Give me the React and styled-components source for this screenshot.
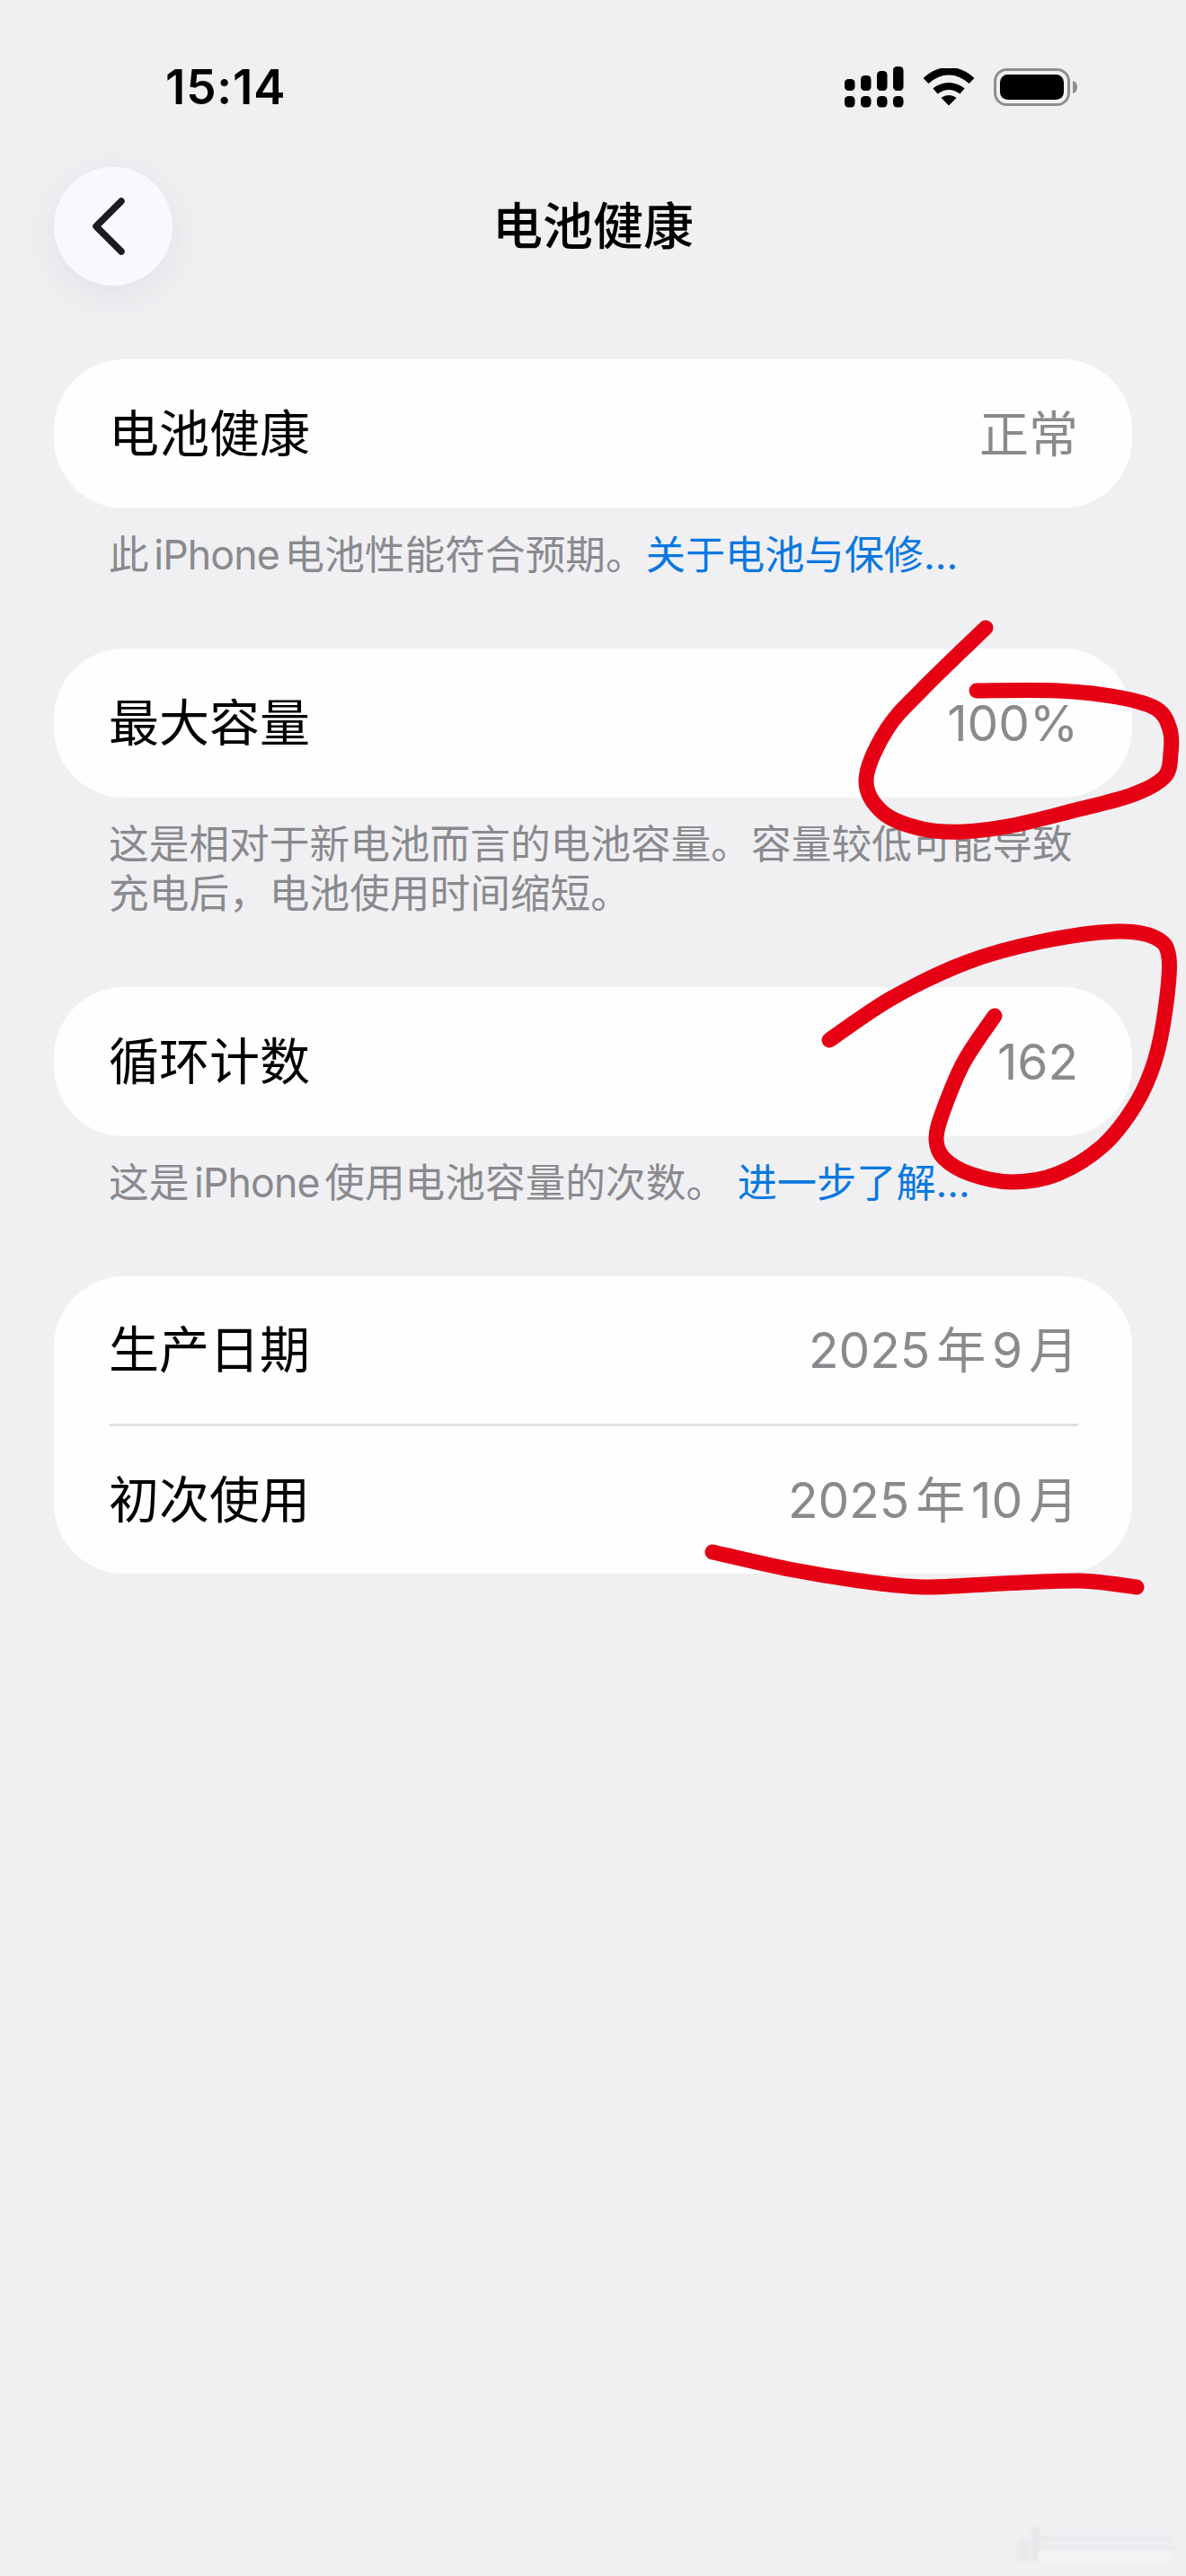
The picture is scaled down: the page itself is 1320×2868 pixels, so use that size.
import React from "react";
import styled, { createGlobalStyle } from "styled-components";

const Global = createGlobalStyle`
  html, body { margin: 0; padding: 0; background: #f0f0f3; }
  * { box-sizing: border-box; }
`;

const Page = styled.div`
  position: relative;
  width: 1320px;
  height: 2868px;
  overflow: hidden;
  background: #f0f0f3;
  color: #000;
  font-family: Inter, "Noto Sans CJK SC", sans-serif;
  text-autospace: normal;
`;

const StatusBar = styled.div`
  display: flex;
  align-items: center;
  justify-content: space-between;
  height: 50px;
  margin-top: 72px;
  padding: 0 120px 0 184px;
`;

const Time = styled.span`
  font-size: 53px;
  font-weight: 600;
  letter-spacing: 0.8px;
  line-height: 50px;
`;

const StatusIcons = styled.div`
  display: flex;
  align-items: center;
  gap: 21px;
`;

const Header = styled.header`
  display: grid;
  grid-template-columns: 132px 1fr 132px;
  align-items: center;
  margin-top: 64px;
  padding: 0 60px;
`;

const BackButton = styled.button`
  display: flex;
  align-items: center;
  justify-content: center;
  width: 132px;
  height: 132px;
  padding: 0 10px 0 0;
  border: 0;
  border-radius: 50%;
  background: #f9f9fd;
  box-shadow: 0 10px 44px rgba(60, 60, 80, 0.08);
`;

const Title = styled.h1`
  margin: 0;
  text-align: center;
  font-size: 56px;
  font-weight: 500;
  line-height: 70px;
`;

const Content = styled.main`
  display: flex;
  flex-direction: column;
  gap: 76.5px;
  margin-top: 82px;
  padding: 0 60px;
`;

const Section = styled.section`
  display: flex;
  flex-direction: column;
  gap: 25px;
`;

const Card = styled.div`
  display: flex;
  flex-direction: column;
  border-radius: 78px;
  background: #fefefe;
`;

const Row = styled.div`
  display: flex;
  align-items: center;
  justify-content: space-between;
  height: ${(p) => (p.$compact ? "164px" : "166px")};
  padding: 0 60px 0 61px;
`;

const Label = styled.span`
  font-size: 56px;
  line-height: 70px;
`;

const Value = styled.span`
  color: #8a8a8e;
  font-size: 55px;
  line-height: 70px;
`;

const Separator = styled.div`
  height: 3px;
  margin: 0 60px 0 61px;
  background: #e2e2e4;
`;

const Caption = styled.p`
  margin: 0;
  padding: 0 50px 0 61px;
  color: #8a8a8e;
  font-size: 44.7px;
  line-height: 54.5px;
`;

const Latin = styled.span`
  letter-spacing: -0.9px;
`;

const Link = styled.span`
  color: #0a78e0;
  font-size: 44.2px;
`;

const Annotations = styled.svg`
  position: absolute;
  top: 0;
  left: 0;
  pointer-events: none;
`;

const Watermark = styled.svg`
  position: absolute;
  right: 0;
  bottom: 0;
  filter: blur(2px);
`;

const smooth = (pts) => {
  let d = `M${pts[0][0]} ${pts[0][1]}`;
  for (let i = 0; i < pts.length - 1; i++) {
    const p0 = pts[i - 1] || pts[i];
    const p1 = pts[i];
    const p2 = pts[i + 1];
    const p3 = pts[i + 2] || p2;
    const c1x = p1[0] + (p2[0] - p0[0]) / 6;
    const c1y = p1[1] + (p2[1] - p0[1]) / 6;
    const c2x = p2[0] - (p3[0] - p1[0]) / 6;
    const c2y = p2[1] - (p3[1] - p1[1]) / 6;
    d += ` C${c1x} ${c1y} ${c2x} ${c2y} ${p2[0]} ${p2[1]}`;
  }
  return d;
};

const strokes = [
  [[1097, 699], [1027, 767], [987, 812], [964, 868], [983, 905], [1027, 923], [1073, 926], [1127, 919], [1193, 903], [1260, 885], [1296, 865], [1303, 839], [1302, 812], [1287, 789], [1243, 776], [1177, 769], [1087, 769]],
  [[923, 1158], [993, 1111], [1077, 1071], [1160, 1048], [1243, 1037], [1286, 1044], [1301, 1066], [1297, 1124], [1285, 1182], [1263, 1231], [1227, 1276], [1177, 1307], [1127, 1316], [1080, 1307], [1050, 1289], [1042, 1267], [1050, 1236], [1073, 1182], [1107, 1131]],
  [[793, 1728], [878, 1747], [957, 1760], [1028, 1767], [1115, 1763], [1202, 1760], [1265, 1767]],
];

const SignalIcon = () => (
  <svg width="66" height="46" viewBox="0 0 66 46">
    {[[0, 14], [18, 10], [36, 5], [54, 0]].map(([x, y]) => (
      <rect key={x} x={x} y={y} width="11.5" height={27 - y} rx="4.5" fill="#000" />
    ))}
    {[0, 18, 36, 54].map((x) => (
      <rect key={x} x={x} y="33" width="11.5" height="12.5" rx="4.5" fill="#000" />
    ))}
  </svg>
);

const WifiIcon = () => (
  <svg width="58" height="42" viewBox="0 0 58 42">
    <path d="M3.5 14 C19 -0.5 39 -0.5 54.5 14" fill="none" stroke="#000" strokeWidth="8.5" />
    <path d="M14 25.5 C23 18 35 18 44 25.5" fill="none" stroke="#000" strokeWidth="8" />
    <path d="M20.5 33 C25.5 29 32.5 29 37.5 33 L29 41.5 Z" fill="#000" />
  </svg>
);

const BatteryIcon = () => (
  <svg width="94" height="42" viewBox="0 0 94 42">
    <rect x="1.5" y="1.5" width="82" height="39" rx="13" fill="none" stroke="#8e8e90" strokeWidth="3" />
    <rect x="7" y="7" width="71" height="28" rx="8.5" fill="#000" />
    <path d="M88 14 C91.5 15 93 18 93 21 C93 24 91.5 27 88 28 Z" fill="#8e8e90" />
  </svg>
);

const BackChevron = () => (
  <svg width="42" height="66" viewBox="0 0 42 66">
    <path d="M35 5 L7 33 L35 61" fill="none" stroke="#1c1c1e" strokeWidth="7.5" strokeLinecap="round" strokeLinejoin="round" />
  </svg>
);

export default function App() {
  return (
    <Page>
      <Global />
      <StatusBar>
        <Time>15:14</Time>
        <StatusIcons>
          <SignalIcon />
          <WifiIcon />
          <BatteryIcon />
        </StatusIcons>
      </StatusBar>
      <Header>
        <BackButton aria-label="返回"><BackChevron /></BackButton>
        <Title>电池健康</Title>
      </Header>
      <Content>
        <Section>
          <Card>
            <Row><Label>电池健康</Label><Value>正常</Value></Row>
          </Card>
          <Caption>此<Latin>iPhone</Latin>电池性能符合预期。<Link>关于电池与保修…</Link></Caption>
        </Section>
        <Section>
          <Card>
            <Row><Label>最大容量</Label><Value>100%</Value></Row>
          </Card>
          <Caption>这是相对于新电池而言的电池容量。容量较低可能导致充电后，电池使用时间缩短。</Caption>
        </Section>
        <Section>
          <Card>
            <Row><Label>循环计数</Label><Value>162</Value></Row>
          </Card>
          <Caption>这是<Latin>iPhone</Latin>使用电池容量的次数。 <Link>进一步了解…</Link></Caption>
        </Section>
        <Section>
          <Card>
            <Row $compact><Label>生产日期</Label><Value>2025年9月</Value></Row>
            <Separator />
            <Row $compact><Label>初次使用</Label><Value>2025年10月</Value></Row>
          </Card>
        </Section>
      </Content>
      <Annotations width="1320" height="2868" viewBox="0 0 1320 2868">
        {strokes.map((pts, i) => (
          <path key={i} d={smooth(pts)} fill="none" stroke="#e60014" strokeWidth="17" strokeLinecap="round" strokeLinejoin="round" />
        ))}
      </Annotations>
      <Watermark width="200" height="64" viewBox="0 0 200 64">
        <rect x="30" y="10" width="5" height="38" fill="#e2e2e5" />
        <rect x="13" y="24" width="12" height="24" fill="#e8e8eb" />
        <rect x="35" y="21" width="150" height="3" fill="#e4e4e7" />
        <rect x="35" y="31" width="150" height="3" fill="#e4e4e7" />
        <rect x="35" y="36" width="150" height="11" fill="#f5f5f7" />
      </Watermark>
    </Page>
  );
}
